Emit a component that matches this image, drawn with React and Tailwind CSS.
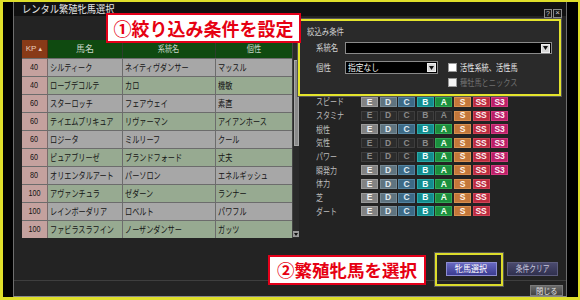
import React from "react";

const rows = [
  ["40", "シルティーク", "ネイティヴダンサー", "マッスル"],
  ["40", "ローブデコルテ", "カロ", "機敏"],
  ["60", "スターロッチ", "フェアウェイ", "素直"],
  ["60", "テイエムプリキュア", "リヴァーマン", "アイアンホース"],
  ["60", "ロジータ", "ミルリーフ", "クール"],
  ["60", "ピュアブリーゼ", "ブランドフォード", "丈夫"],
  ["80", "オリエンタルアート", "パーソロン", "エネルギッシュ"],
  ["100", "アヴァンチュラ", "ゼダーン", "ランナー"],
  ["100", "レインボーダリア", "ロベルト", "パワフル"],
  ["100", "ファビラスラフイン", "ノーザンダンサー", "ガッツ"],
];

const stats = [
  ["スピード", 8, 0],
  ["スタミナ", 8, 5],
  ["根性", 8, 0],
  ["気性", 8, 4],
  ["パワー", 8, 3],
  ["瞬発力", 8, 0],
  ["体力", 7, 0],
  ["芝", 7, 0],
  ["ダート", 7, 0],
];

const grades = ["E", "D", "C", "B", "A", "S", "SS", "S3"];
const activeCls = {
  E: "bg-[#828282] text-[#f0f0f0] border-[#9a9a9a]",
  D: "bg-[#5f7480] text-[#e0e8ee] border-[#778a95]",
  C: "bg-[#3d6a86] text-[#e0ecf4] border-[#5383a0]",
  B: "bg-[#128d8e] text-[#f0ffff] border-[#2aa8a8]",
  A: "bg-[#1b8f3e] text-[#f0fff0] border-[#33aa55]",
  S: "bg-[#c4773a] text-[#fff4e8] border-[#d8904f]",
  SS: "bg-[#bb2b3f] text-[#fff0f0] border-[#d04457]",
  S3: "bg-[#bb1f68] text-[#fff0f6] border-[#d3387f]",
};
const inactiveCls = "bg-[#2c2c2c] text-[#8a8a8a] border-[#3e3e3e]";

function Grade({ g, active }) {
  return (
    <div
      className={`w-[17px] h-[10px] border flex items-center justify-center text-[8.5px] font-bold leading-none font-['Liberation_Sans',sans-serif] ${
        active ? activeCls[g] : inactiveCls
      }`}
    >
      {g}
    </div>
  );
}

function Arrow() {
  return (
    <div className="w-[9px] h-[9px] bg-[#d6d6d6] border border-[#f0f0f0] flex items-center justify-center">
      <svg width="5" height="4" viewBox="0 0 5 4">
        <path d="M0 0H5L2.5 4Z" fill="#111" />
      </svg>
    </div>
  );
}

function Cell({ children, className = "" }) {
  return (
    <div className={`flex items-center pl-[2px] whitespace-nowrap overflow-hidden ${className}`}>
      <span className="inline-block origin-left scale-x-[0.75]">{children}</span>
    </div>
  );
}

export default function App() {
  return (
    <div className="relative w-[580px] h-[300px] bg-[#dede2a] pt-[2px] pl-[3px] pr-[2px] pb-[3px] font-['Noto_Sans_CJK_JP',sans-serif] overflow-hidden">
      <div className="w-full h-full bg-black pl-[10px]">
        <div className="w-[554px] h-[295px] flex flex-col bg-[#232323] border-x border-[#6e6e6e] border-b border-b-[#8a8a8a]">
          {/* title bar */}
          <div className="h-[14px] bg-[#111] flex items-center justify-between pl-[8px] pr-[4px]">
            <span className="inline-block origin-left scale-x-[0.88] text-[10.5px] leading-none text-[#e6e6e6] whitespace-nowrap">レンタル繁殖牝馬選択</span>
            <div className="flex gap-[1px] mt-[8px]">
              <div className="w-[8px] h-[9px] border border-[#8a8a8a] bg-[#1a1a1a] text-[#ccc] text-[7px] leading-none flex items-center justify-center font-['Liberation_Sans',sans-serif]">?</div>
              <div className="w-[9px] h-[9px] border border-[#8a8a8a] bg-[#1a1a1a] text-[#ccc] text-[8px] leading-none flex items-center justify-center font-['Liberation_Sans',sans-serif]">×</div>
            </div>
          </div>

          {/* main */}
          <div className="flex pt-[24px] pl-[8px]">
            {/* table */}
            <div className="flex">
              <div className="w-[270px] flex flex-col">
                <div className="flex h-[18px]">
                  <div className="w-[26px] bg-[#883a17] border-r border-[#5a2a10] flex items-center justify-center text-[#e8cdbd] text-[8px] font-['Liberation_Sans',sans-serif]">
                    KP<span className="text-[6px] ml-[1px]">▲</span>
                  </div>
                  <div className="w-[75px] bg-[#0f4a10] border-r border-[#2b3f2b] flex items-center justify-center text-[#c9d6c9] text-[9px]">馬名</div>
                  <div className="w-[93px] bg-[#0f4a10] border-r border-[#2b3f2b] flex items-center justify-center text-[#c9d6c9] text-[9px]">
                    <span className="inline-block scale-x-[0.8]">系統名</span>
                  </div>
                  <div className="flex-1 bg-[#0f4a10] flex items-center justify-center text-[#c9d6c9] text-[9px]">
                    <span className="inline-block scale-x-[0.8]">個性</span>
                  </div>
                </div>
                {rows.map((r, i) => (
                  <div
                    key={i}
                    className={`flex h-[18px] border-t border-[#6c6c6c] text-[9.5px] text-[#141414] ${
                      i % 2 === 0 ? "bg-[#a7a7a7]" : "bg-[#97aa91]"
                    }`}
                  >
                    <div className="w-[26px] bg-[#c4a19e] border-r border-[#7a6a6a] flex items-center justify-center text-[9px] font-['Liberation_Sans',sans-serif]">
                      <span className="inline-block scale-x-[0.8]">{r[0]}</span>
                    </div>
                    <Cell className="w-[75px] border-r border-[#6c6c6c]">{r[1]}</Cell>
                    <Cell className="w-[93px] border-r border-[#6c6c6c]">{r[2]}</Cell>
                    <Cell className="flex-1">{r[3]}</Cell>
                  </div>
                ))}
              </div>
              {/* scrollbar */}
              <div className="w-[7px] h-[198px] bg-[#2a2a2a] border-l border-[#444] flex flex-col items-center">
                <div className="w-[5px] h-[86px] mt-[20px] bg-[#8a8a8a] border border-[#a8a8a8]" />
                <div className="flex-1" />
                <div className="w-[6px] h-[6px] bg-[#9a9a9a] flex items-center justify-center mb-[1px]">
                  <svg width="4" height="3" viewBox="0 0 4 3">
                    <path d="M0 0H4L2 3Z" fill="#111" />
                  </svg>
                </div>
              </div>
            </div>

            {/* stats */}
            <div className="ml-[17px] mt-[55px] flex flex-col">
              {stats.map(([label, n, first]) => (
                <div key={label} className="h-[13.7px] flex items-center">
                  <div className="w-[45px] text-[9px] leading-none text-[#bdbdbd] whitespace-nowrap">
                    <span className="inline-block origin-left scale-x-[0.78]">{label}</span>
                  </div>
                  <div className="flex gap-[1.6px]">
                    {grades.slice(0, n).map((g, gi) => (
                      <Grade key={g} g={g} active={gi >= first} />
                    ))}
                  </div>
                </div>
              ))}
            </div>
          </div>

          {/* bottom buttons */}
          <div className="mt-[24px] h-[14px] flex justify-end pr-[8px] gap-[10px]">
            <div className="w-[51px] h-[14px] bg-gradient-to-b from-[#6868c0] to-[#3c3c90] border border-[#8c8cd0] flex items-center justify-center text-[9px] text-white whitespace-nowrap">
              <span className="inline-block scale-x-[0.9]">牝馬選択</span>
            </div>
            <div className="w-[51px] h-[14px] bg-gradient-to-b from-[#4a4a6e] to-[#30304e] border border-[#5c5c7c] flex items-center justify-center text-[9px] text-[#c8c8dc] whitespace-nowrap">
              <span className="inline-block scale-x-[0.75]">条件クリア</span>
            </div>
          </div>
          <div className="mt-[4px] h-[1px] bg-[#3e3e3e]" />
          <div className="mt-[4px] h-[11px] flex justify-end pr-[3px]">
            <div className="w-[33px] h-[11px] bg-gradient-to-b from-[#6a6a6a] to-[#444] border border-[#7a7a7a] flex items-center justify-center text-[8.5px] leading-none text-[#e0e0e0] whitespace-nowrap">
              <span className="inline-block scale-x-[0.85]">閉じる</span>
            </div>
          </div>
        </div>
      </div>

      {/* filter panel overlay */}
      <div className="absolute left-[298px] top-[19px] w-[263px] h-[77px] border-2 border-[#e4e42c] bg-[#2a2a2a] shadow-[0_0_0_1px_#555] pl-[7px] pt-[5px] flex flex-col">
        <div className="text-[9px] leading-[12px] text-[#cfcfcf] whitespace-nowrap">
          <span className="inline-block origin-left scale-x-[0.82]">絞込み条件</span>
        </div>
        <div className="mt-[4px] flex items-center h-[12px]">
          <div className="w-[38px] pl-[9px] text-[9px] text-[#d0d0d0] whitespace-nowrap">
            <span className="inline-block origin-left scale-x-[0.82]">系統名</span>
          </div>
          <div className="w-[207px] h-[12px] bg-black border border-[#8a8a8a] flex items-center justify-end pr-[1px]">
            <Arrow />
          </div>
        </div>
        <div className="mt-[7px] flex items-center h-[13px]">
          <div className="w-[38px] pl-[9px] text-[9px] text-[#d0d0d0] whitespace-nowrap">
            <span className="inline-block origin-left scale-x-[0.82]">個性</span>
          </div>
          <div className="w-[93px] h-[13px] bg-black border border-[#8a8a8a] flex items-center justify-between pl-[2px] pr-[1px]">
            <span className="inline-block origin-left scale-x-[0.86] text-[9px] leading-none text-[#f0f0f0] whitespace-nowrap">指定なし</span>
            <Arrow />
          </div>
          <div className="ml-[10px] w-[9px] h-[9px] bg-white border border-[#999]" />
          <span className="ml-[3px] inline-block origin-left scale-x-[0.8] text-[9px] leading-none text-[#e6e6e6] whitespace-nowrap">活性系統、活性馬</span>
        </div>
        <div className="mt-[4px] flex items-center h-[9px] pl-[141px]">
          <div className="w-[9px] h-[9px] bg-[#f4f4f4] border border-[#999]" />
          <span className="ml-[3px] inline-block origin-left scale-x-[0.8] text-[9px] leading-none text-[#707070] whitespace-nowrap">種牡馬とニックス</span>
        </div>
      </div>

      {/* annotation 1 */}
      <div className="absolute left-[106px] top-[13px] w-[195px] h-[30px] bg-white border-2 border-[#e4001a] flex items-center justify-center">
        <span className="text-[18px] font-bold leading-none text-[#e60012] whitespace-nowrap">①絞り込み条件を設定</span>
      </div>

      {/* annotation 2 */}
      <div className="absolute left-[268px] top-[255px] w-[158px] h-[30px] bg-white border-2 border-[#e4001a] flex items-center justify-center">
        <span className="text-[17.5px] font-bold leading-none text-[#e60012] whitespace-nowrap">②繁殖牝馬を選択</span>
      </div>

      {/* highlight box around button */}
      <div className="absolute left-[435px] top-[253px] w-[68px] h-[33px] border-2 border-[#dcdc2c] shadow-[0_0_0_1px_#555]" />
    </div>
  );
}
